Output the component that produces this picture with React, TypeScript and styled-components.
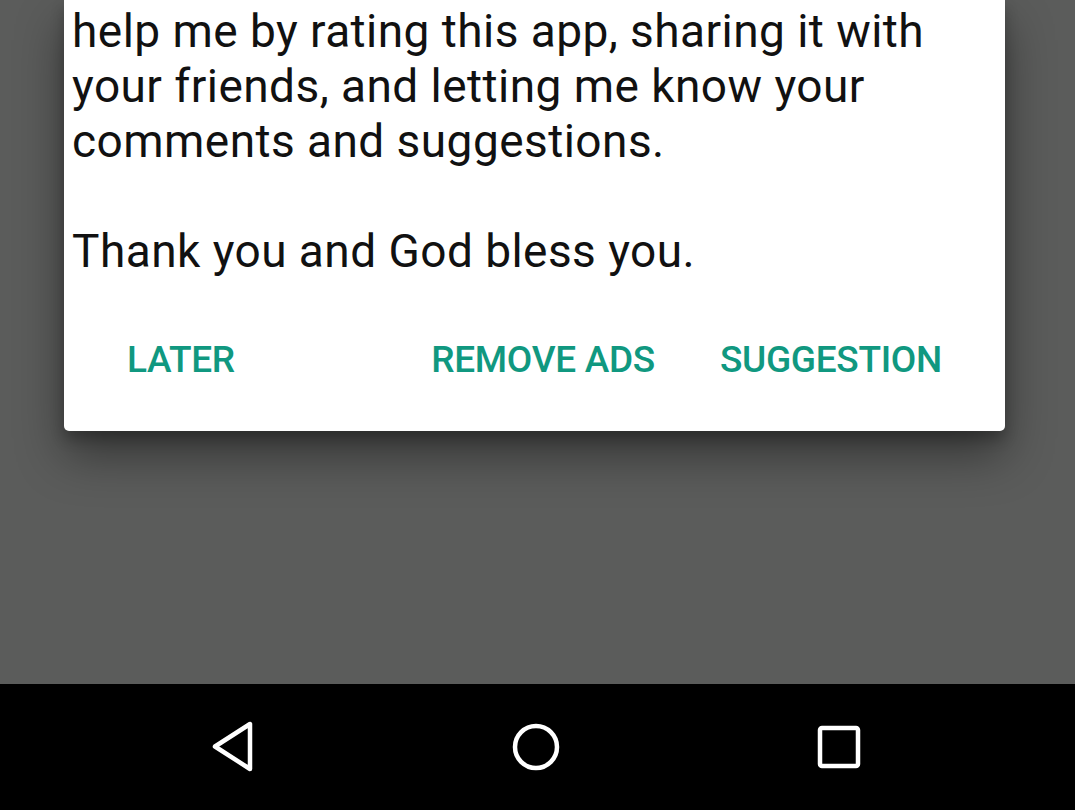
import React from "react";
import styled, { createGlobalStyle } from "styled-components";

const Global = createGlobalStyle`
  html, body { margin: 0; padding: 0; }
  body { background: #5b5c5b; font-family: Roboto, "Noto Sans", sans-serif; }
  * { box-sizing: border-box; }
`;

const Screen = styled.div`
  width: 1075px;
  height: 810px;
  display: flex;
  flex-direction: column;
  overflow: hidden;
  background: #5b5c5b;
`;

const Scrim = styled.div`
  flex: 1;
  padding: 0 70px 0 64px;
`;

const Dialog = styled.div`
  width: 941px;
  background: #ffffff;
  border-radius: 0 0 5px 5px;
  box-shadow: 0 24px 48px rgba(0, 0, 0, 0.42), 0 8px 14px rgba(0, 0, 0, 0.24);
  padding: 4px 0 35px 0;
`;

const Message = styled.p`
  margin: 0;
  padding: 0 45px 0 8px;
  font-family: Roboto, sans-serif;
  font-size: 46px;
  letter-spacing: 0.45px;
  line-height: 55px;
  color: #111111;
  & + & { margin-top: 55px; }
`;

const Actions = styled.div`
  display: flex;
  align-items: center;
  height: 74px;
  margin-top: 43px;
  padding: 0 63px;
`;

const Spacer = styled.div`
  flex: 1;
`;

const ActionButton = styled.button<{ $gap?: number }>`
  border: none;
  background: transparent;
  padding: 0;
  margin-left: ${(p) => p.$gap ?? 0}px;
  font-family: Roboto, sans-serif;
  font-weight: 500;
  font-size: 37px;
  letter-spacing: -0.3px;
  color: #109880;
  cursor: pointer;
`;

const NavBar = styled.div`
  height: 126px;
  background: #000000;
  display: grid;
  grid-template-columns: repeat(3, 1fr);
  align-items: center;
  justify-items: center;
`;

const NavIcon = styled.svg<{ $shift?: number }>`
  display: block;
  margin-left: ${(p) => Math.max(0, (p.$shift ?? 0) * 2)}px;
  margin-right: ${(p) => Math.max(0, -(p.$shift ?? 0) * 2)}px;
`;

export default function App() {
  return (
    <>
      <Global />
      <Screen>
        <Scrim>
          <Dialog>
            <Message>
              help me by rating this app, sharing it with your friends, and letting me know your comments and suggestions.
            </Message>
            <Message>Thank you and God bless you.</Message>
            <Actions>
              <ActionButton>LATER</ActionButton>
              <Spacer />
              <ActionButton>REMOVE ADS</ActionButton>
              <ActionButton $gap={65}>SUGGESTION</ActionButton>
            </Actions>
          </Dialog>
        </Scrim>
        <NavBar>
          <NavIcon $shift={53} width="48" height="52" viewBox="0 0 48 52">
            <path d="M42 3 L42 48 L7 25.5 Z" fill="none" stroke="#fff" strokeWidth="4.5" strokeLinejoin="round" />
          </NavIcon>
          <NavIcon $shift={-1} width="52" height="52" viewBox="0 0 52 52">
            <circle cx="26" cy="26" r="21" fill="none" stroke="#fff" strokeWidth="4.5" />
          </NavIcon>
          <NavIcon $shift={-57} width="46" height="46" viewBox="0 0 46 46">
            <rect x="4" y="4" width="38" height="38" rx="2" fill="none" stroke="#fff" strokeWidth="4.5" />
          </NavIcon>
        </NavBar>
      </Screen>
    </>
  );
}
